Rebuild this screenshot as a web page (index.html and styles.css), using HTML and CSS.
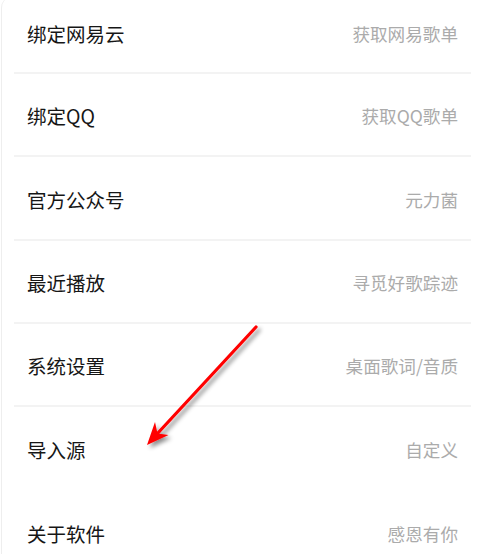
FILE: index.html
```html
<!DOCTYPE html>
<html lang="zh">
<head>
<meta charset="utf-8">
<link rel="stylesheet" href="styles.css">
</head>
<body>
<div class="card">
  <div class="row top"><span class="label">绑定网易云</span><span class="hint">获取网易歌单</span></div>
  <div class="row"><span class="label">绑定QQ</span><span class="hint">获取QQ歌单</span></div>
  <div class="row"><span class="label">官方公众号</span><span class="hint">元力菌</span></div>
  <div class="row"><span class="label">最近播放</span><span class="hint">寻觅好歌踪迹</span></div>
  <div class="row"><span class="label">系统设置</span><span class="hint">桌面歌词/音质</span></div>
  <div class="row plain"><span class="label">导入源</span><span class="hint">自定义</span></div>
  <div class="row plain"><span class="label">关于软件</span><span class="hint">感恩有你</span></div>
</div>
<svg class="arrow" width="494" height="554" viewBox="0 0 494 554">
  <defs>
    <filter id="sh" x="-20%" y="-20%" width="140%" height="140%">
      <feDropShadow dx="3" dy="3" stdDeviation="2" flood-color="#000" flood-opacity="0.45"/>
    </filter>
  </defs>
  <g filter="url(#sh)">
    <line x1="256" y1="327" x2="157" y2="434" stroke="#ff0000" stroke-width="3.2" stroke-linecap="round"/>
    <polygon points="147,445 155,422 157.5,433.5 168.5,435" fill="#ff0000"/>
  </g>
</svg>
</body>
</html>
```
FILE: styles.css
```css
html, body {
  margin: 0;
  padding: 0;
  background: #ffffff;
  overflow: hidden;
}
body {
  width: 494px;
  height: 554px;
  position: relative;
  font-family: "Noto Sans CJK SC", "Noto Sans", sans-serif;
}
.card {
  margin-top: -4px;
  margin-left: 1px;
  width: 493px;
  background: #ffffff;
  border-left: 1.5px solid #eeeeee;
  border-radius: 12px 0 0 12px;
  padding: 0 0 0 12px;
  box-sizing: border-box;
}
.row {
  width: 457px;
  height: 83.25px;
  box-sizing: border-box;
  padding: 3px 13px 0 13px;
  display: flex;
  align-items: center;
  justify-content: space-between;
  border-bottom: 2px solid #f3f3f3;
}
.row.top {
  height: 78px;
  padding-top: 0;
}
.row.plain {
  border-bottom: none;
}
.label {
  font-size: 19.5px;
  color: #161616;
  line-height: 1;
}
.hint {
  font-size: 17.6px;
  color: #ababab;
  line-height: 1;
}
.arrow {
  position: absolute;
  left: 0;
  top: 0;
  pointer-events: none;
}
```
